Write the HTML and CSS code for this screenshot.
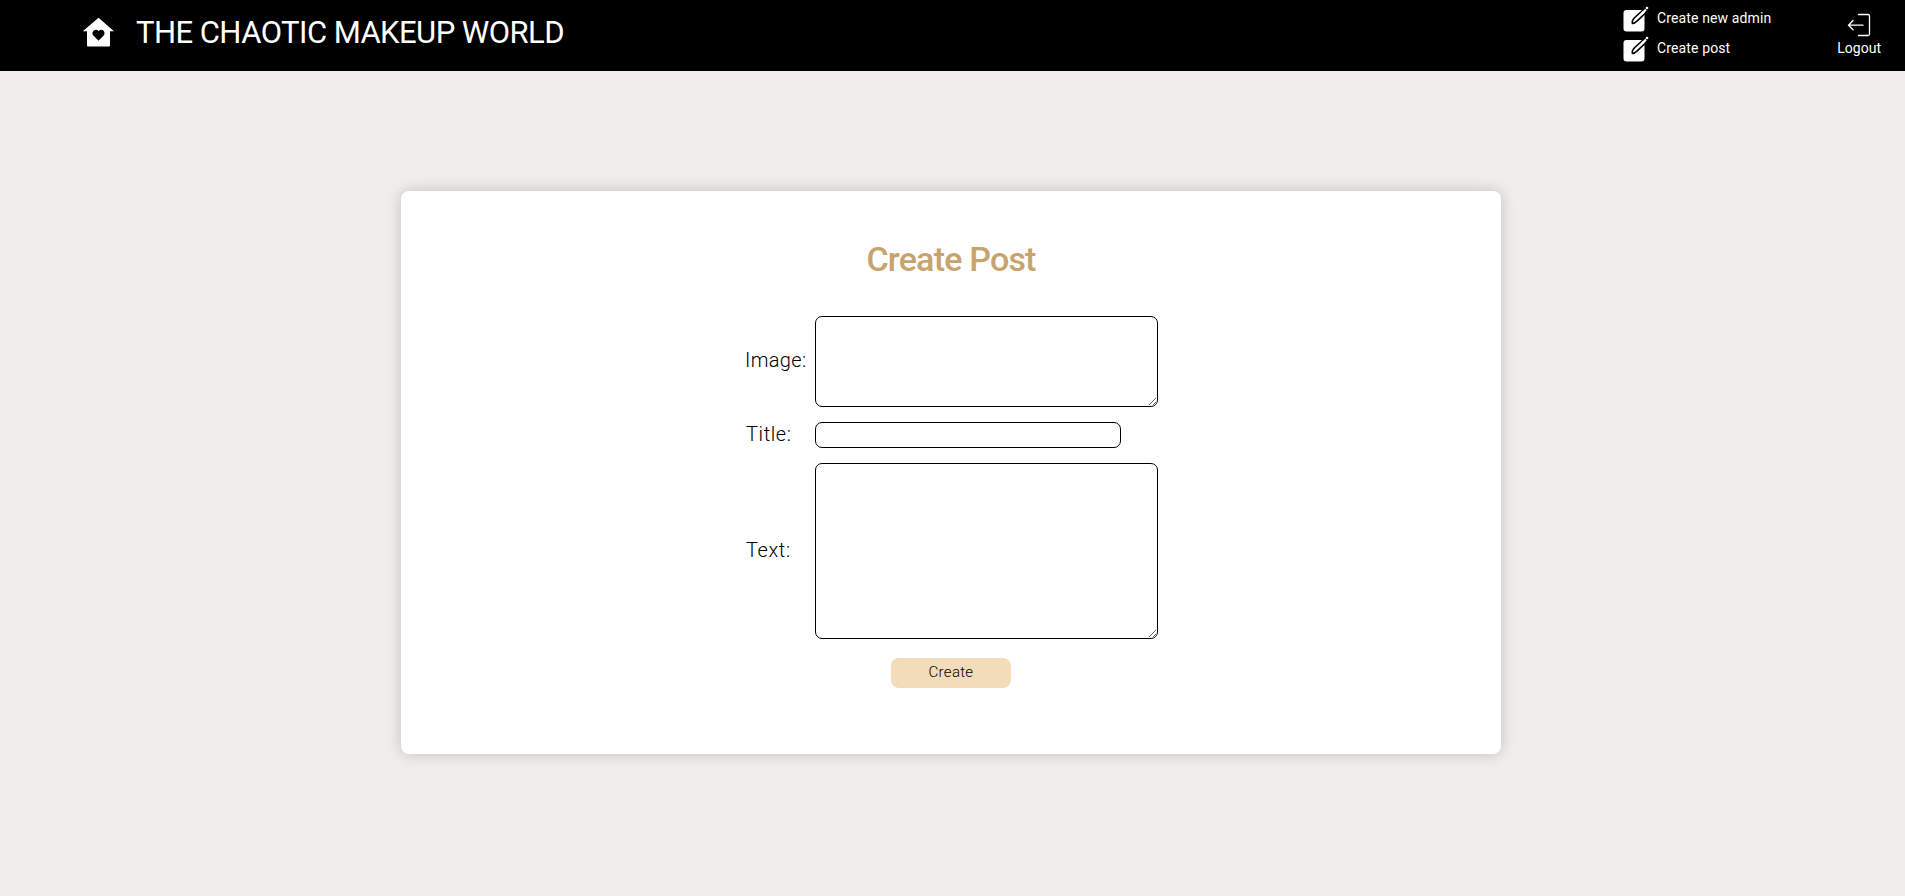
FILE: index.html
```html
<!DOCTYPE html>
<html lang="en">
<head>
<meta charset="utf-8">
<title>The Chaotic Makeup World</title>
<link rel="stylesheet" href="styles.css">
</head>
<body>
<header class="header">
  <a class="brand">
    <svg class="home-icon" width="32" height="30" viewBox="0 0 32 30"><path fill="#fff" fill-rule="evenodd" d="M16.500 .8 .8 14.200H5V28.500q0 1 1 1H27q1 0 1-1V14.200H32ZM16.500 23.800 11.300 18.500C8.500 15 13.500 10.500 16.500 14.200 19.500 10.500 24.500 15 21.700 18.500Z"/></svg>
    <span class="brand-name">THE CHAOTIC MAKEUP WORLD</span>
  </a>
  <nav class="nav">
    <div class="links">
      <a class="link"><svg class="edit-icon" width="26" height="26" viewBox="0 0 26 26"><rect x=".5" y="4" width="21" height="21.500" rx="3" fill="#fff"/><path d="M9.500 17.500c-.8-2 .3-4 2-5.800L20 4l3 2.500-8.500 8.200c-1.600 1.500-3.200 2.800-5 2.800Z" fill="#fff" stroke="#000" stroke-width="1.600"/><path d="m19 7.500 4-4" stroke="#fff" stroke-width="2.200"/><circle cx="24" cy="2" r="1.300" fill="#fff"/></svg><span class="admin-text">Create new admin</span></a>
      <a class="link"><svg class="edit-icon" width="26" height="26" viewBox="0 0 26 26"><rect x=".5" y="4" width="21" height="21.500" rx="3" fill="#fff"/><path d="M9.500 17.500c-.8-2 .3-4 2-5.800L20 4l3 2.500-8.500 8.200c-1.600 1.500-3.200 2.800-5 2.800Z" fill="#fff" stroke="#000" stroke-width="1.600"/><path d="m19 7.500 4-4" stroke="#fff" stroke-width="2.200"/><circle cx="24" cy="2" r="1.300" fill="#fff"/></svg><span class="post-text">Create post</span></a>
    </div>
    <a class="logout">
      <svg width="24" height="24" viewBox="0 0 24 24" fill="none" stroke="#fff" stroke-linecap="round"><path stroke-width="1.300" d="M11.500 1.500H21q1.500 0 1.500 1.500V21q0 1.500-1.500 1.500H11.500"/><path stroke-width="1.300" d="M2 12.200H16M6 7.500 1.500 12.200 6 16.700"/></svg>
      <span class="logout-text">Logout</span>
    </a>
  </nav>
</header>
<main class="card">
  <h1 class="heading">Create Post</h1>
  <form class="form">
    <label class="label image-label" for="image">Image:</label>
    <textarea class="field image-field" id="image"></textarea>
    <label class="label title-label" for="title">Title:</label>
    <input class="field title-field" id="title" type="text">
    <label class="label text-label" for="text">Text:</label>
    <textarea class="field text-field" id="text"></textarea>
  </form>
  <button class="create" type="button"><span>Create</span></button>
</main>
</body>
</html>
```

FILE: styles.css
```css
* { box-sizing: border-box; }
body {
  margin: 0;
  min-height: 896px;
  background: #efeeec;
  font-family: Roboto, "Liberation Sans", sans-serif;
  color: #000;
}
.header {
  display: flex;
  justify-content: space-between;
  height: 71px;
  padding: 0 24px 0 82px;
  background: #000;
  color: #fff;
}
.brand { display: flex; align-items: flex-start; gap: 22px; padding-top: 17px; }
.brand-name { padding-top: 1px; font-size: 31px; font-weight: 400; line-height: 30px; letter-spacing: -.55px; white-space: nowrap; }
.nav { display: flex; gap: 66px; font-size: 14px; white-space: nowrap; }
.links { display: flex; flex-direction: column; gap: 4px; padding-top: 6px; }
.link { display: flex; gap: 8px; height: 26px; line-height: 25px; letter-spacing: .12px; }
.logout { display: flex; flex-direction: column; align-items: center; padding-top: 13px; line-height: 23px; }
.card {
  display: flex;
  flex-direction: column;
  align-items: center;
  width: 1100px;
  height: 563px;
  margin: 120px 0 0 401px;
  padding-top: 46px;
  background: #fff;
  border-radius: 8px;
  box-shadow: 0 0 15px rgba(0, 0, 0, .2);
}
.heading {
  margin: 0;
  font-size: 34px;
  line-height: 44px;
  font-weight: 500;
  letter-spacing: -.8px;
  color: #c7a36d;
}
.form {
  display: grid;
  grid-template-columns: 70px 343px;
  grid-template-rows: 91px 26px 176px;
  row-gap: 15px;
  margin-top: 35px;
  padding-left: 1px;
}
.label { align-self: center; padding-bottom: 3px; font-size: 20px; font-weight: 300; line-height: 24px; letter-spacing: .35px; }
.title-label, .text-label { padding-left: 1px; letter-spacing: .6px; }
.field {
  display: block;
  width: 343px;
  height: 100%;
  margin: 0;
  border: 1px solid #000;
  border-radius: 7px;
  background: #fff;
  outline: none;
}
.title-field { width: 306px; }
.create {
  width: 120px;
  height: 30px;
  margin-top: 19px;
  padding: 0 0 1px;
  border: 0;
  border-radius: 8px;
  background: #f3dcb9;
  color: #000;
  font: 300 15px/29px Roboto, "Liberation Sans", sans-serif;
  letter-spacing: .3px;
}
```
